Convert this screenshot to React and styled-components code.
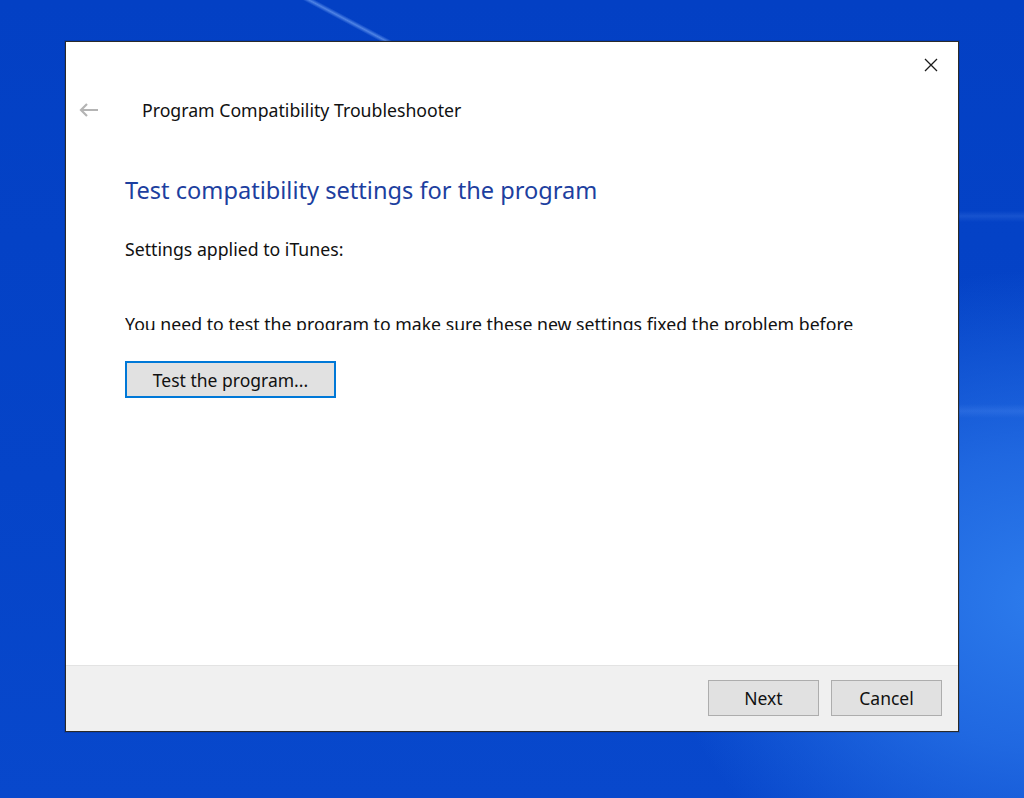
import React from 'react';
import styled, { createGlobalStyle } from 'styled-components';

const GlobalStyle = createGlobalStyle`
  html, body {
    margin: 0;
    padding: 0;
  }
  body {
    font-family: 'Noto Sans', 'Open Sans', sans-serif;
  }
`;

const Desktop = styled.div`
  position: relative;
  width: 1024px;
  height: 798px;
  overflow: hidden;
  padding: 41px 0 0 65px;
  box-sizing: border-box;
  background:
    linear-gradient(28deg, transparent 34.9%, rgba(140, 185, 255, 0.55) 35.5%, transparent 36.1%) 0 0 / 1024px 45px no-repeat,
    linear-gradient(180deg, transparent 211px, rgba(120, 170, 255, 0.16) 216px, transparent 222px) right 0 top 0 / 70px 798px no-repeat,
    linear-gradient(180deg, transparent 404px, rgba(120, 170, 255, 0.16) 411px, transparent 418px) right 0 top 0 / 70px 798px no-repeat,
    radial-gradient(ellipse 380px 330px at 1040px 600px, #2c7bec 0%, rgba(40, 115, 232, 0.75) 45%, transparent 100%),
    linear-gradient(180deg, #0340c4 0%, #0544c8 60%, #0848cc 100%);
`;

const Window = styled.div`
  position: relative;
  width: 894px;
  height: 691px;
  box-sizing: border-box;
  border: 1px solid #2a2a2a;
  background: #ffffff;
  display: flex;
  flex-direction: column;
  box-shadow: 0 0 0 1px rgba(0, 0, 0, 0.1);
`;

const TitleBar = styled.div`
  display: flex;
  justify-content: flex-end;
  height: 43px;
`;

const CloseButton = styled.button`
  width: 46px;
  height: 43px;
  margin-right: 4px;
  border: none;
  background: transparent;
  display: flex;
  align-items: center;
  justify-content: center;
  padding: 0;
  padding-top: 3px;
`;

const Header = styled.div`
  display: flex;
  align-items: center;
  height: 50px;
`;

const BackArrow = styled.div`
  width: 76px;
  display: flex;
  padding-left: 13px;
  box-sizing: border-box;
`;

const HeaderTitle = styled.div`
  font-size: 17.7px;
  color: #111;
`;

const Content = styled.div`
  flex: 1;
  padding: 0 0 0 59px;
  display: flex;
  flex-direction: column;
`;

const Heading = styled.h1`
  margin: 38px 0 0;
  font-size: 23.6px;
  font-weight: 400;
  color: #1d3f9f;
  line-height: 34px;
`;

const Body = styled.p`
  margin: 31px 0 0;
  font-size: 17.7px;
  line-height: 22px;
  color: #111;
`;

const ClippedText = styled.div`
  margin-top: 53px;
  height: 17px;
  overflow: hidden;
  font-size: 17.7px;
  line-height: 22px;
  color: #111;
  white-space: nowrap;
  width: 760px;
`;

const PushButton = styled.button`
  font-family: 'Noto Sans', 'Open Sans', sans-serif;
  font-size: 17.5px;
  color: #111;
  background: #e1e1e1;
  border: 1px solid ${(p) => (p.focused ? '#0078d7' : '#adadad')};
  box-shadow: ${(p) => (p.focused ? 'inset 0 0 0 1px #0078d7' : 'none')};
  width: ${(p) => p.w}px;
  height: ${(p) => p.h}px;
  padding: 0;
  border-radius: 0;
`;

const TestRow = styled.div`
  margin-top: 31px;
`;

const Footer = styled.div`
  height: 66px;
  border-top: 1px solid #e3e3e3;
  background: #f0f0f0;
  display: flex;
  justify-content: flex-end;
  align-items: flex-start;
  gap: 12px;
  padding: 14px 16px 0 0;
  box-sizing: border-box;
`;

export default function App() {
  return (
    <Desktop>
      <GlobalStyle />
      <Window>
        <TitleBar>
          <CloseButton aria-label="Close">
            <svg width="14" height="14" viewBox="0 0 14 14">
              <path d="M1 1 L13 13 M13 1 L1 13" stroke="#1a1a1a" strokeWidth="1.3" fill="none" />
            </svg>
          </CloseButton>
        </TitleBar>
        <Header>
          <BackArrow>
            <svg width="20" height="14" viewBox="0 0 20 14">
              <path d="M8 1 L2 7 L8 13 M2 7 L19 7" stroke="#b4b4b4" strokeWidth="2.2" fill="none" />
            </svg>
          </BackArrow>
          <HeaderTitle>Program Compatibility Troubleshooter</HeaderTitle>
        </Header>
        <Content>
          <Heading>Test compatibility settings for the program</Heading>
          <Body>Settings applied to iTunes:</Body>
          <ClippedText>
            You need to test the program to make sure these new settings fixed the problem before
          </ClippedText>
          <TestRow>
            <PushButton focused w={211} h={37}>Test the program...</PushButton>
          </TestRow>
        </Content>
        <Footer>
          <PushButton w={111} h={36}>Next</PushButton>
          <PushButton w={111} h={36}>Cancel</PushButton>
        </Footer>
      </Window>
    </Desktop>
  );
}
